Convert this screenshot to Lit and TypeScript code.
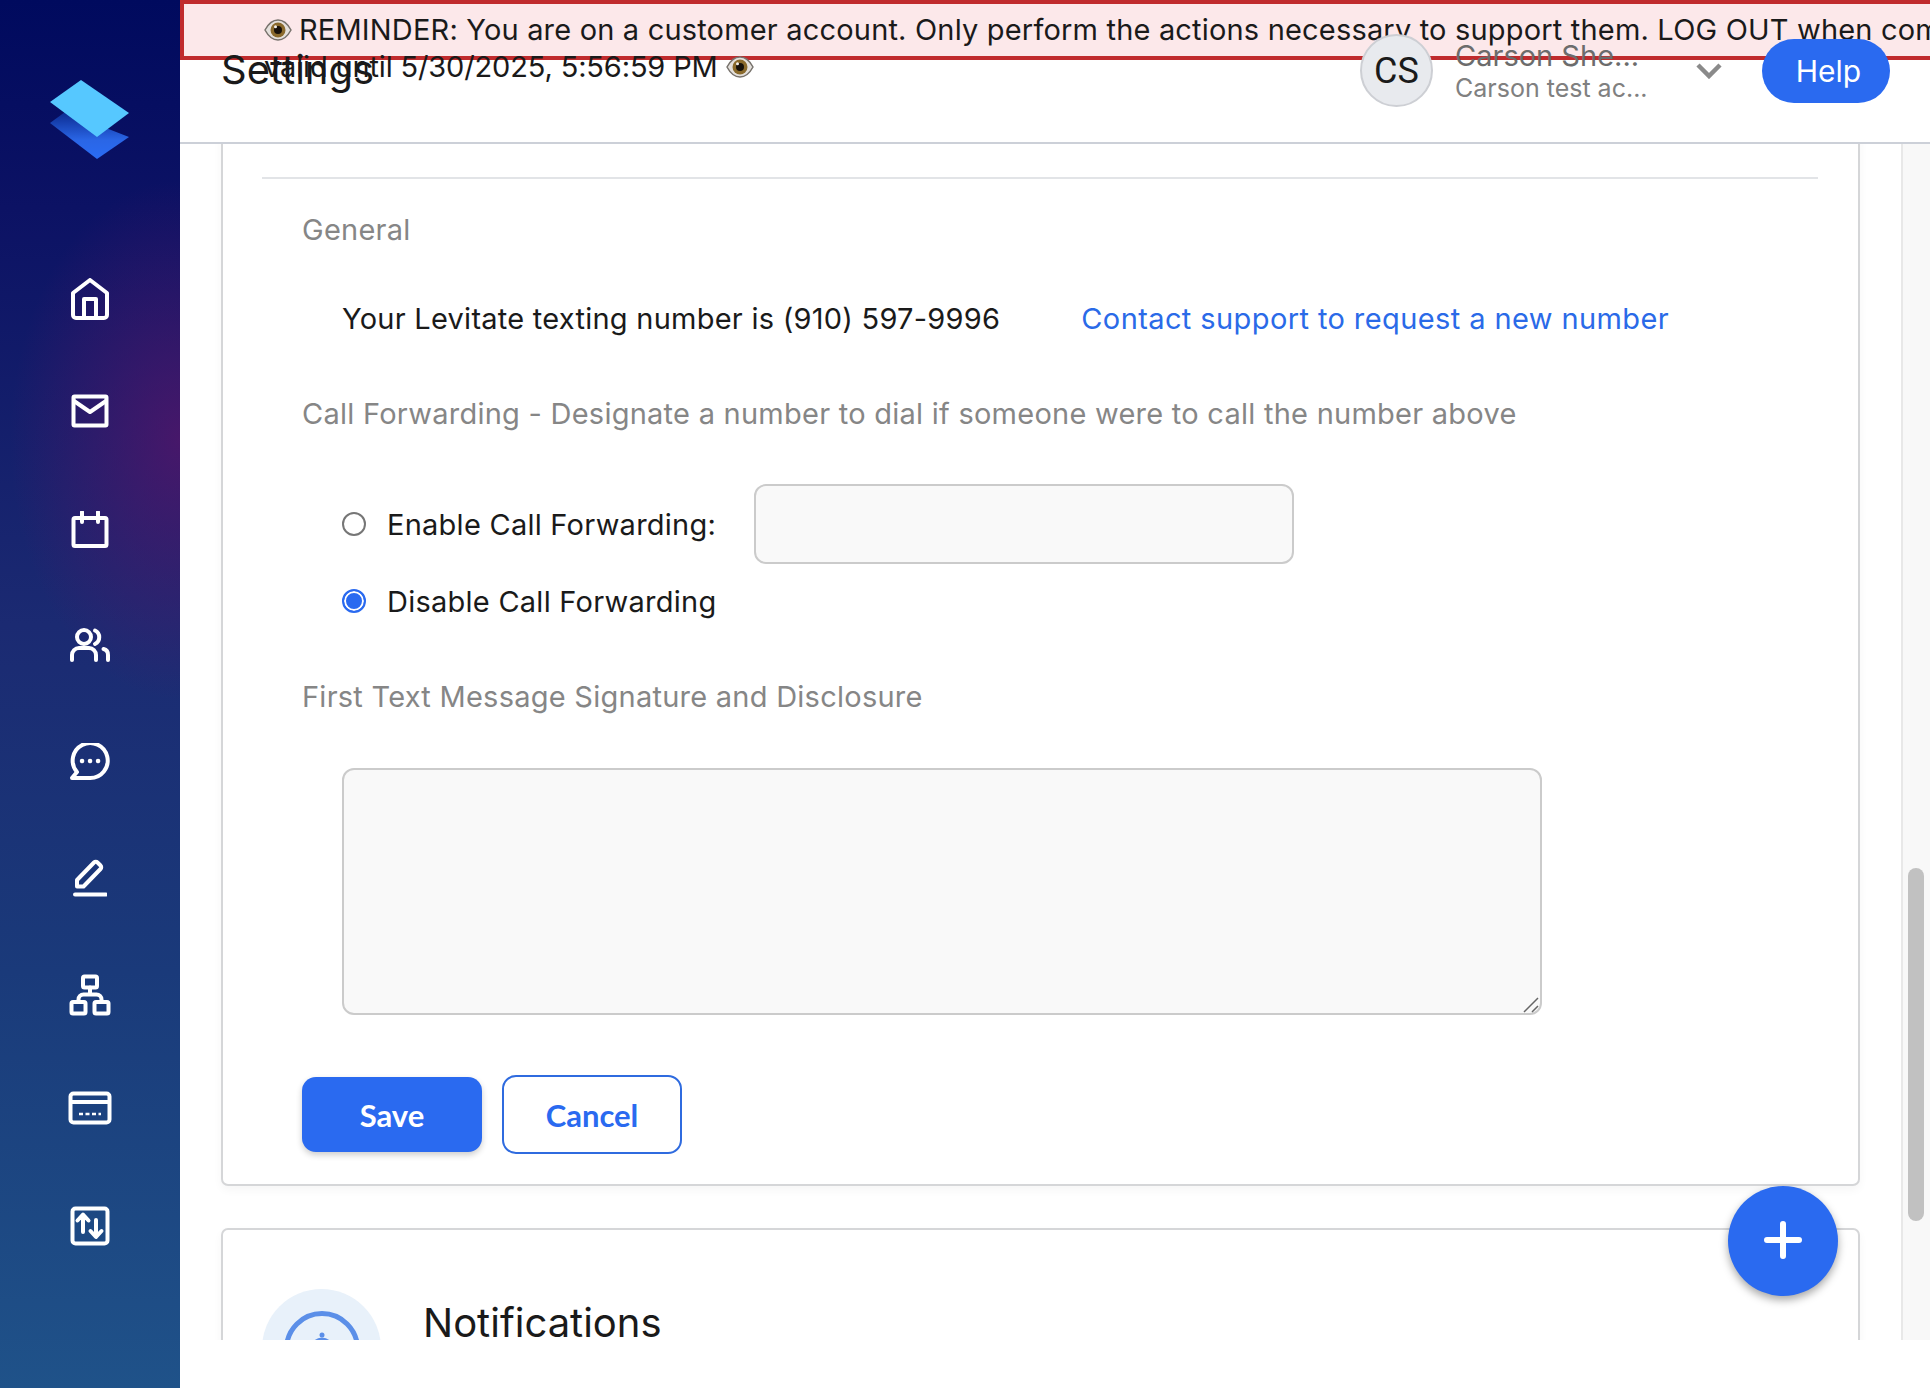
import { LitElement, html, css, svg } from "lit";
import { customElement } from "lit/decorators.js";

const eye = html`<svg class="eye" viewBox="0 0 28 24" width="28" height="24">
  <path d="M1 12C5 4.500 9.500 2 14 2s9 2.500 13 10c-4 7.500-8.500 10-13 10S5 19.500 1 12z" fill="#e4e0dc" stroke="#77726c" stroke-width="1.500"/>
  <circle cx="14" cy="12" r="7.500" fill="#8a6a2c"/>
  <circle cx="14" cy="12" r="4" fill="#17110a"/>
  <circle cx="11.500" cy="8.800" r="1.500" fill="#f4f1ec"/>
</svg>`;

const nav = [
  { h: 116, w: 40, hh: 42, vb: "0 0 40 42", body: svg`<path d="M3 15 20 2l17 13v22a3 3 0 0 1-3 3H6a3 3 0 0 1-3-3z"/><path d="M14 39V21h12v18"/>` },
  { h: 108, w: 38, hh: 34, vb: "0 0 38 34", body: svg`<rect x="2.500" y="2.500" width="33" height="29" rx="1"/><path d="M3 7l16 11L35 7"/>` },
  { h: 130, w: 38, hh: 38, vb: "0 0 38 38", body: svg`<rect x="2.500" y="7" width="33" height="28" rx="1.500"/><path d="M11 1v10M27 1v10"/>` },
  { h: 100, w: 42, hh: 36, vb: "0 0 42 36", body: svg`<circle cx="15" cy="10" r="7"/><path d="M26 3.500a7.500 7.500 0 0 1 0 13.500"/><path d="M3 33v-5a7 7 0 0 1 7-7h10a7 7 0 0 1 7 7v5"/><path d="M34.500 22a6 6 0 0 1 4.500 6v5"/>` },
  { h: 134, w: 42, hh: 38, vb: "0 0 42 38", body: svg`<path d="M21 35H3l5-6A17.500 17.500 0 1 1 21 35z"/><path class="dots" d="M13 18h.1M21 18h.1M29 18h.1"/>` },
  { h: 98, w: 34, hh: 38, vb: "0 0 34 38", body: svg`<path d="M4 21 21 3.500a2.500 2.500 0 0 1 3.500 0l3 3a2.500 2.500 0 0 1 0 3.500L10.500 27.500H4z"/><path d="M2 35.500h31"/>` },
  { h: 136, w: 42, hh: 42, vb: "0 0 42 42", body: svg`<rect x="14" y="2.500" width="14" height="11" rx="1.500"/><rect x="2.500" y="28" width="14" height="11.500" rx="1.500"/><rect x="25.500" y="28" width="14" height="11.500" rx="1.500"/><path d="M21 13.500v7M9.500 28v-2.500a5 5 0 0 1 5-5h13a5 5 0 0 1 5 5V28"/>` },
  { h: 90, w: 44, hh: 34, vb: "0 0 44 34", body: svg`<rect x="2.500" y="2.500" width="39" height="29" rx="3"/><path d="M3 11h38"/><path class="thin" d="M11 23h22" stroke-dasharray="4 2.500"/>` },
  { h: 146, w: 40, hh: 40, vb: "0 0 40 40", body: svg`<rect x="2.500" y="2.500" width="35" height="35" rx="3"/><path class="thick" d="M13 26V9M7.500 14.500 13 8.500l5.500 6M26 14v16M20.500 25l5.500 6 5.500-6"/>` },
];

@customElement("app-root")
export class AppRoot extends LitElement {
  static styles = css`
    :host {
      display: block;
      width: 100%;
      height: 1388px;
      overflow: hidden;
      background: #fff;
      font-family: "Inter", "Liberation Sans", sans-serif;
      color: #1a1a1a;
    }
    .app { display: flex; height: 1388px; }
    .side {
      width: 180px;
      flex: none;
      display: flex;
      flex-direction: column;
      background:
        radial-gradient(ellipse 170px 260px at 180px 440px, rgba(90, 20, 105, 0.72), rgba(90, 20, 105, 0) 100%),
        linear-gradient(180deg, #000a5e 0%, #0c1264 15%, #1b2a72 45%, #1a3a7a 70%, #1f5289 100%);
    }
    .logo { height: 241px; flex: none; display: flex; justify-content: center; padding-top: 80px; box-sizing: border-box; }
    .item { display: flex; align-items: center; justify-content: center; flex: none; }
    .item svg { fill: none; stroke: #fff; stroke-width: 4; stroke-linejoin: round; stroke-linecap: round; }
    .item svg .dots { stroke-width: 4.500; }
    .item svg .thin { stroke-width: 2.500; stroke-linecap: butt; }
    .item svg .thick { stroke-width: 4; }

    .main { position: relative; flex: 1; min-width: 0; display: flex; flex-direction: column; }
    .banner {
      position: absolute;
      top: 0; left: 0; right: 0;
      height: 60px;
      box-sizing: border-box;
      border: 4px solid #c02b2d;
      border-right: none;
      background: #fce8ea;
      z-index: 1;
      padding: 7px 0 0 80px;
      font-size: 29px;
      line-height: 37px;
      white-space: nowrap;
    }
    .banner .line { display: flex; align-items: center; gap: 7px; }
    .banner .l1 { letter-spacing: 0.18px; }
    .banner .l2 { letter-spacing: -0.15px; gap: 8px; }
    .eye { flex: none; }
    .header {
      height: 144px;
      flex: none;
      box-sizing: border-box;
      border-bottom: 2px solid #ccd0d8;
      display: flex;
      align-items: flex-start;
      padding: 34px 40px 0 41px;
    }
    .title { font-size: 40px; line-height: 46px; margin-top: 13px; flex: 1; position: relative; z-index: 2; }
    .user { display: flex; align-items: flex-start; position: relative; z-index: 2; }
    .avatar {
      width: 73px; height: 73px; box-sizing: border-box;
      border-radius: 50%;
      background: #e8eaee;
      border: 2px solid #cdcfd4;
      display: flex; align-items: center; justify-content: center;
      font-family: "Roboto", sans-serif;
      font-size: 36px;
    }
    .who { width: 241px; margin-left: 22px; color: #808080; font-size: 25px; line-height: 31px; padding-top: 6px; }
    .who .name { font-size: 29px; color: #6c6c6c; margin-bottom: 2px; }
    .chev { margin-top: 29px; }
    .help {
      margin: 5px 0 0 40px;
      width: 128px; height: 64px;
      border: none; border-radius: 32px;
      background: #2a6af0; color: #fff;
      padding: 0 0 0 5px;
      font: 400 30px "Inter", sans-serif;
    }
    .body { flex: 1; min-height: 0; display: flex; }
    .scroll {
      flex: 1; min-width: 0;
      overflow: hidden;
      padding: 0 41px 0 41px;
      display: flex; flex-direction: column; gap: 42px;
    }
    .card {
      flex: none;
      border: 2px solid #d5d6d8;
      border-radius: 7px;
      background: #fff;
      box-shadow: 0 4px 10px rgba(0, 0, 0, 0.04);
    }
    .card.first { margin-top: -20px; padding: 52px 40px 0 38px; height: 1062px; box-sizing: border-box; }
    .rule { height: 2px; background: #e2e4e7; margin-left: 1px; margin-right: 0; margin-top: -1px; }
    .sec { color: #868686; font-size: 29px; letter-spacing: 0.25px; line-height: 36px; margin-left: 41px; }
    .s1 { margin-top: 33px; }
    .s2 { margin-top: 59px; }
    .s3 { margin-top: 53px; }
    .num { display: flex; margin: 53px 0 0 81px; font-size: 29px; letter-spacing: 0.25px; line-height: 36px; color: #1a1a1a; }
    .num a { margin-left: 81px; color: #2a6ae8; text-decoration: none; letter-spacing: 0.4px; }
    .radio { display: flex; align-items: center; margin-left: 81px; font-size: 29px; letter-spacing: 0.25px; }
    .radio input[type="radio"] {
      appearance: none;
      width: 24px; height: 24px; margin: 0 21px 0 0; flex: none;
      box-sizing: border-box;
      border-radius: 50%;
      border: 2px solid #767676;
      background: #fff;
    }
    .radio input[type="radio"]:checked {
      border-color: #2a6af0;
      background: #2a6af0;
      box-shadow: inset 0 0 0 2px #fff;
    }
    .radio label { width: 367px; flex: none; }
    .r1 { margin-top: 52px; height: 80px; }
    .r2 { margin-top: 12px; height: 50px; }
    .field {
      width: 540px; height: 80px; box-sizing: border-box; margin: 0;
      border: 2px solid #cbcbcb; border-radius: 12px; background: #f9f9f9;
      outline: none;
    }
    .ta { position: relative; margin: 53px 0 0 81px; width: 1200px; height: 247px; }
    textarea {
      display: block;
      width: 100%; height: 100%; box-sizing: border-box;
      border: 2px solid #cbcbcb; border-radius: 12px; background: #f9f9f9;
      outline: none; resize: none;
    }
    .grip { position: absolute; right: 3px; bottom: 2px; }
    .actions { display: flex; align-items: center; gap: 20px; margin: 60px 0 0 41px; }
    .btn { width: 180px; box-sizing: border-box; border-radius: 14px; font: 700 31px "Lato", sans-serif; }
    .save { height: 75px; border: none; background: #2a6af0; color: #fff; box-shadow: 0 3px 6px rgba(0,0,0,.2); }
    .cancel { height: 79px; border: 2px solid #2f6bdf; background: #fff; color: #2a6af0; }
    .card.second { padding: 59px 40px 0 39px; height: 300px; box-sizing: border-box; display: flex; gap: 42px; }
    .badge {
      width: 119px; height: 119px; flex: none; border-radius: 50%;
      background: #e8f1fa;
      display: flex; align-items: center; justify-content: center;
    }
    .ntitle { font-size: 40px; line-height: 46px; margin-top: 11px; }
    .track {
      width: 29px; flex: none; box-sizing: border-box;
      border-left: 2px solid #e8e8e8;
      background: #f8f8f8;
      padding: 724px 5px 0 5px;
    }
    .thumb { width: 16px; height: 353px; border-radius: 8px; background: #c1c1c1; }
    .foot { height: 48px; flex: none; background: #fff; position: relative; z-index: 1; }
    .fab {
      position: absolute;
      right: 92px; bottom: 92px;
      width: 110px; height: 110px;
      border-radius: 50%; border: none; padding: 0 0 3px;
      background: #2a6af0;
      box-shadow: 0 4px 8px rgba(0, 0, 0, 0.35);
      display: flex; align-items: center; justify-content: center;
      z-index: 3;
    }
  `;

  render() {
    return html`<div class="app">
      <aside class="side">
        <div class="logo">
          <svg width="80" height="80" viewBox="50 80 80 80">
            <defs><linearGradient id="lg" x1="0" y1="0" x2="0" y2="1">
              <stop offset="0" stop-color="#0b2a90"/><stop offset="0.6" stop-color="#2a66e6"/><stop offset="1" stop-color="#2a6cf4"/>
            </linearGradient></defs>
            <path d="M50 123 65 112 129 137 97 159z" fill="url(#lg)"/>
            <path d="M81 80 129 113 97 137 50 102z" fill="#56c8ff"/>
          </svg>
        </div>
        ${nav.map(
          (n) => html`<div class="item" style="height:${n.h}px">
            <svg width=${n.w} height=${n.hh} viewBox=${n.vb}>${n.body}</svg>
          </div>`
        )}
      </aside>
      <div class="main">
        <div class="banner">
          <div class="line l1">${eye}<span>REMINDER: You are on a customer account. Only perform the actions necessary to support them. LOG OUT when complete.</span></div>
          <div class="line l2"><span>valid until 5/30/2025, 5:56:59 PM</span>${eye}</div>
        </div>
        <header class="header">
          <div class="title">Settings</div>
          <div class="user">
            <div class="avatar">CS</div>
            <div class="who"><div class="name">Carson She...</div><div>Carson test ac...</div></div>
            <svg class="chev" width="26" height="16" viewBox="0 0 26 16" fill="none" stroke="#8a8a8a" stroke-width="4.500"><path d="M2 2l11 11L24 2"/></svg>
            <button class="help">Help</button>
          </div>
        </header>
        <div class="body">
          <div class="scroll">
            <section class="card first">
              <div class="rule"></div>
              <div class="sec s1">General</div>
              <div class="num"><span>Your Levitate texting number is (910) 597-9996</span><a>Contact support to request a new number</a></div>
              <div class="sec s2">Call Forwarding - Designate a number to dial if someone were to call the number above</div>
              <div class="radio r1">
                <input type="radio" name="fwd" id="en" />
                <label for="en">Enable Call Forwarding:</label>
                <input class="field" type="text" />
              </div>
              <div class="radio r2">
                <input type="radio" name="fwd" id="dis" checked />
                <label for="dis">Disable Call Forwarding</label>
              </div>
              <div class="sec s3">First Text Message Signature and Disclosure</div>
              <div class="ta">
                <textarea></textarea>
                <svg class="grip" width="16" height="16" viewBox="0 0 16 16" fill="none" stroke="#666" stroke-width="1.500"><path d="M1 15 15 1M9 15l6-6"/></svg>
              </div>
              <div class="actions">
                <button class="btn save">Save</button>
                <button class="btn cancel">Cancel</button>
              </div>
            </section>
            <section class="card second">
              <div class="badge">
                <svg width="80" height="80" viewBox="0 0 80 80" fill="none" stroke="#5b8fe8" stroke-width="5">
                  <circle cx="40" cy="40" r="35.500"/>
                  <circle cx="40" cy="26" r="2.500" fill="#5b8fe8" stroke="none"/>
                  <path d="M31 40a9 9 0 0 1 18 0v8"/>
                </svg>
              </div>
              <div class="ntitle">Notifications</div>
            </section>
          </div>
          <div class="track"><div class="thumb"></div></div>
        </div>
        <div class="foot"></div>
        <button class="fab" aria-label="Add">
          <svg width="38" height="38" viewBox="0 0 38 38" stroke="#fff" stroke-width="6" stroke-linecap="round"><path d="M19 3v32M3 19h32"/></svg>
        </button>
      </div>
    </div>`;
  }
}
